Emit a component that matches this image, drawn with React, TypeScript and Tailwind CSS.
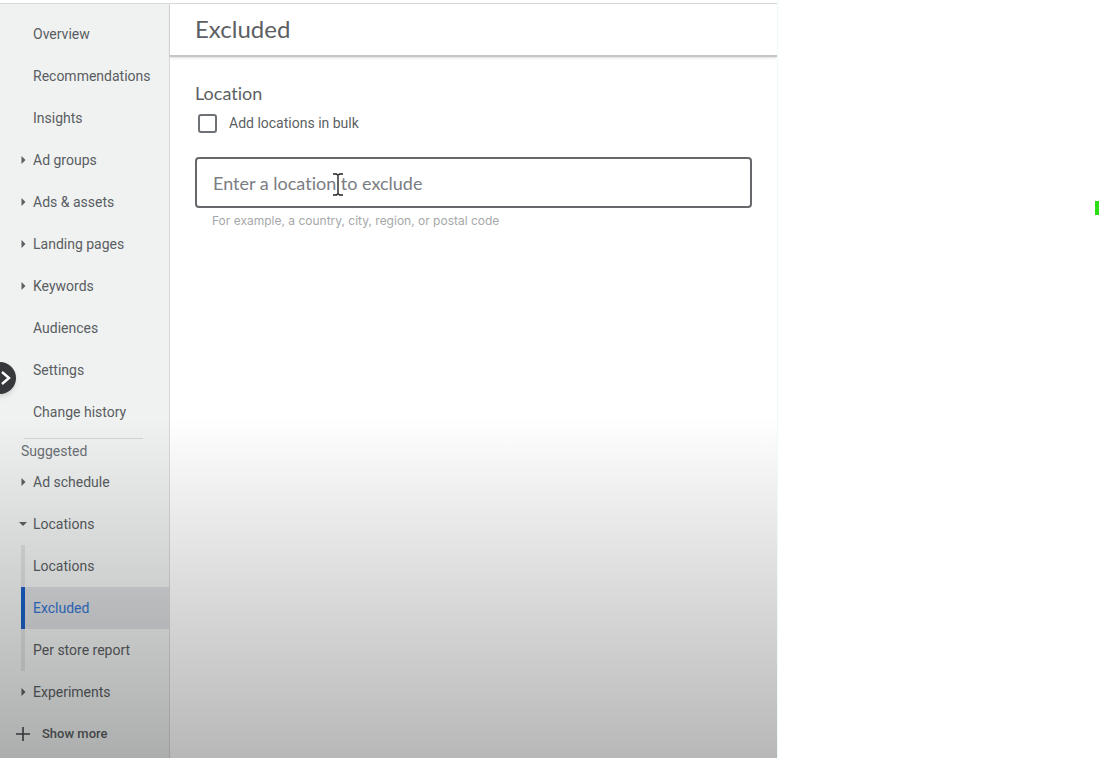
import type { ReactNode } from "react";

type Item = { label: string; arrow?: "right" | "down" };

const mainItems: Item[] = [
  { label: "Overview" },
  { label: "Recommendations" },
  { label: "Insights" },
  { label: "Ad groups", arrow: "right" },
  { label: "Ads & assets", arrow: "right" },
  { label: "Landing pages", arrow: "right" },
  { label: "Keywords", arrow: "right" },
  { label: "Audiences" },
  { label: "Settings" },
  { label: "Change history" },
];

const locationItems = [
  { label: "Locations", active: false },
  { label: "Excluded", active: true },
  { label: "Per store report", active: false },
];

function Arrow({ kind }: { kind?: "right" | "down" }) {
  return (
    <span className="flex w-5 shrink-0 justify-center">
      {kind === "right" && (
        <svg width="5" height="8" viewBox="0 0 5 8" fill="#5c5f63" aria-hidden="true">
          <path d="M0.5 0L4.5 4L0.5 8Z" />
        </svg>
      )}
      {kind === "down" && (
        <svg width="8" height="4" viewBox="0 0 8 4" fill="#5c5f63" aria-hidden="true">
          <path d="M0 0H8L4 4Z" />
        </svg>
      )}
    </span>
  );
}

function NavRow({ label, arrow }: Item) {
  return (
    <li>
      <a href="#" className="flex h-[42px] items-center pl-[13px]">
        <Arrow kind={arrow} />
        <span>{label}</span>
      </a>
    </li>
  );
}

function Sidebar({ children }: { children: ReactNode }) {
  return (
    <nav
      aria-label="Campaign"
      className="w-[170px] shrink-0 border-r border-[#d7d9da] bg-[#eff2f1] pt-[9px] text-sm whitespace-nowrap text-[#5a5d61]"
    >
      {children}
    </nav>
  );
}

export default function App() {
  return (
    <div className="flex min-h-screen bg-white font-['Roboto',sans-serif]">
      <div className="relative flex min-w-0 flex-1 flex-col overflow-hidden border-r border-[#eefaf8]">
        <div className="h-[4px] border-b border-[#d9dbdb] bg-white" />
        <div className="flex flex-1">
          <Sidebar>
            <ul>
              {mainItems.map((item) => (
                <NavRow key={item.label} {...item} />
              ))}
            </ul>
            <div className="mt-[5px] mr-[26px] ml-6 border-t border-[#d3d5d6]" />
            <h2 className="flex h-[22px] items-end pl-[21px] leading-5 text-[#6c7074]">Suggested</h2>
            <ul>
              <NavRow label="Ad schedule" arrow="right" />
              <NavRow label="Locations" arrow="down" />
              {locationItems.map((item) => (
                <li key={item.label} className="pl-[21px]">
                  <a
                    href="#"
                    aria-current={item.active ? "page" : undefined}
                    className={
                      item.active
                        ? "flex h-[42px] items-center border-l-4 border-[#1a5fc4] bg-[#dadcdf] pl-2 text-[#3273cf]"
                        : "flex h-[42px] items-center border-l-4 border-[#dcdfe0] pl-2"
                    }
                  >
                    {item.label}
                  </a>
                </li>
              ))}
              <NavRow label="Experiments" arrow="right" />
            </ul>
            <button type="button" className="flex h-[42px] items-center gap-3 pl-4 text-[13px] font-medium">
              <svg width="14" height="14" viewBox="0 0 14 14" stroke="#45484c" strokeWidth="1.6" aria-hidden="true">
                <path d="M7 0V14M0 7H14" />
              </svg>
              Show more
            </button>
          </Sidebar>

          <main className="min-w-0 flex-1 font-['Lato',sans-serif] text-[#5c5f63] [font-variant-ligatures:none]">
            <header className="flex h-[53px] items-center border-b-2 border-[#c4c5c6] pb-0.5 pl-[25px] shadow-sm">
              <h1 className="text-2xl leading-8">Excluded</h1>
            </header>
            <section className="px-[25px] pt-6">
              <h2 className="text-lg leading-6">Location</h2>
              <label className="mt-2 ml-[3px] flex h-5 items-center gap-3 font-['Roboto',sans-serif] text-sm">
                <input
                  type="checkbox"
                  className="size-[19px] appearance-none rounded-[3px] border-2 border-[#6e7175] bg-white"
                />
                Add locations in bulk
              </label>
              <div className="relative mt-6">
                <input
                  type="text"
                  aria-label="Enter a location to exclude"
                  aria-describedby="location-hint"
                  placeholder="Enter a location to exclude"
                  className="block h-[51px] w-full rounded-[4px] border-2 border-[#66686b] bg-white px-4 text-lg placeholder:text-[#7a7d81]"
                />
                <svg
                  className="pointer-events-none absolute top-4 left-[138px]"
                  width="10"
                  height="23"
                  viewBox="0 0 10 23"
                  fill="none"
                  stroke="#222"
                  strokeWidth="1.4"
                  aria-hidden="true"
                >
                  <path d="M0 1H3.5L4.5 2M10 1H6.5L5.5 2M5 1.5V21.5M0 22H3.5L4.5 21M10 22H6.5L5.5 21" />
                </svg>
              </div>
              <p
                id="location-hint"
                className="mt-[3px] pl-[17px] font-['Inter',sans-serif] text-xs leading-5 text-[#a6a8aa]"
              >
                For example, a country, city, region, or postal code
              </p>
            </section>
          </main>
        </div>

        <button
          type="button"
          aria-label="Expand navigation"
          className="absolute top-[362px] -left-4 flex size-8 items-center justify-end rounded-full bg-[#36383b] pr-[5px] shadow-md"
        >
          <svg width="12" height="16" viewBox="0 0 12 16" fill="none" stroke="#fff" strokeWidth="2.4" aria-hidden="true">
            <path d="M3 2L10 8L3 14" />
          </svg>
        </button>
        <div className="pointer-events-none absolute inset-x-0 bottom-0 h-[45%] bg-linear-to-b from-black/0 to-black/28" />
      </div>

      <aside className="flex w-[323px] shrink-0 justify-end pt-[201px] pr-[2px]">
        <div className="h-[14px] w-1 bg-[#2be010]" />
      </aside>
    </div>
  );
}
